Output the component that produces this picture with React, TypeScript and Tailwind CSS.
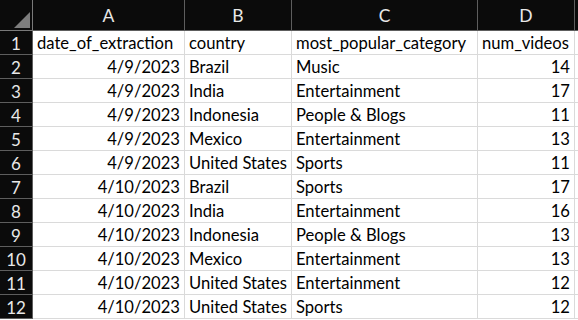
import React from "react";

const rows: [string, string, string, string][] = [
  ["4/9/2023", "Brazil", "Music", "14"],
  ["4/9/2023", "India", "Entertainment", "17"],
  ["4/9/2023", "Indonesia", "People & Blogs", "11"],
  ["4/9/2023", "Mexico", "Entertainment", "13"],
  ["4/9/2023", "United States", "Sports", "11"],
  ["4/10/2023", "Brazil", "Sports", "17"],
  ["4/10/2023", "India", "Entertainment", "16"],
  ["4/10/2023", "Indonesia", "People & Blogs", "13"],
  ["4/10/2023", "Mexico", "Entertainment", "13"],
  ["4/10/2023", "United States", "Entertainment", "12"],
  ["4/10/2023", "United States", "Sports", "12"],
];

const cols = "grid grid-cols-[33px_152px_107px_186px_97px_1fr]";
const font = { fontFamily: "Lato, 'Liberation Sans', sans-serif" };

function Cell({ children, right }: { children?: React.ReactNode; right?: boolean }) {
  return (
    <div
      className={`h-[24px] border-r border-b border-[#dadada] bg-white text-black text-[16.6px] leading-none flex items-center px-[4px] pt-[2px] whitespace-nowrap overflow-hidden ${
        right ? "justify-end" : "justify-start"
      }`}
    >
      {children}
    </div>
  );
}

function RowHead({ n }: { n: number }) {
  return (
    <div className="h-[24px] bg-[#0b0b0b] border-r border-b border-[#5e5e5e] text-[#e8e8e8] text-[17px] leading-none flex items-center justify-center pt-[2px]">
      {n}
    </div>
  );
}

export default function App() {
  return (
    <div className="w-[578px] h-[320px] bg-white overflow-hidden" style={font}>
      <div className={`${cols} h-[31px] bg-[#0b0b0b]`}>
        <div className="border-r border-b border-[#7a7a7a] relative">
          <svg className="absolute left-0 top-0" width="33" height="31">
            <polygon points="14,28 30,28 30,12" fill="#7d7d7d" />
          </svg>
        </div>
        {["A", "B", "C", "D"].map((c) => (
          <div
            key={c}
            className="border-r border-b border-[#5e5e5e] text-[#e8e8e8] text-[17.5px] leading-none flex items-center justify-center pt-[1px]"
          >
            {c}
          </div>
        ))}
        <div className="border-b border-[#5e5e5e]" />
      </div>
      <div className={cols}>
        <RowHead n={1} />
        <Cell>date_of_extraction</Cell>
        <Cell>country</Cell>
        <Cell>most_popular_category</Cell>
        <Cell>num_videos</Cell>
        <div className="h-[24px] border-b border-[#dadada]" />
      </div>
      {rows.map((r, i) => (
        <div key={i} className={cols}>
          <RowHead n={i + 2} />
          <Cell right>{r[0]}</Cell>
          <Cell>{r[1]}</Cell>
          <Cell>{r[2]}</Cell>
          <Cell right>{r[3]}</Cell>
          <div className="h-[24px] border-b border-[#dadada]" />
        </div>
      ))}
    </div>
  );
}
